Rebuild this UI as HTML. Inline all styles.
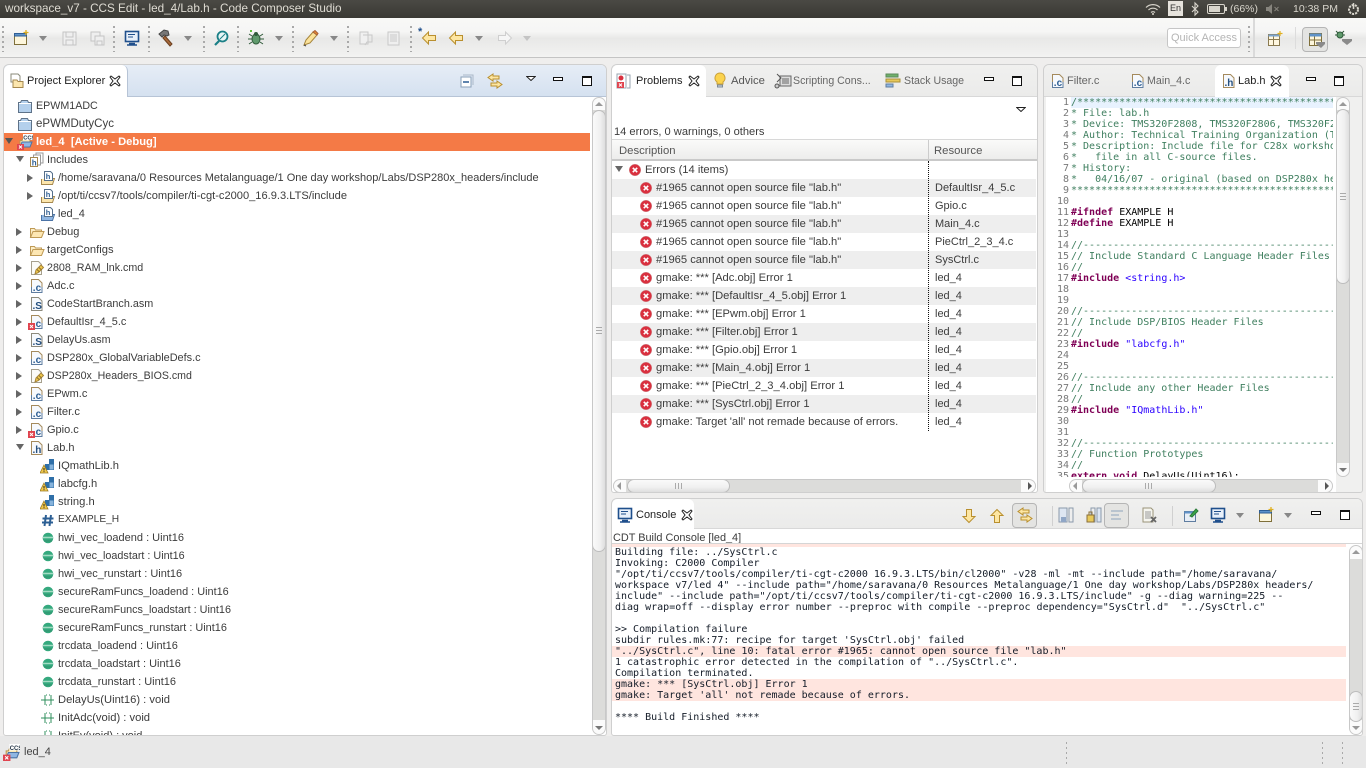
<!DOCTYPE html>
<html><head><meta charset="utf-8"><title>workspace_v7 - CCS Edit - led_4/Lab.h - Code Composer Studio</title>
<style>
*{box-sizing:border-box}
html,body{margin:0;padding:0;width:1366px;height:768px;overflow:hidden;background:#efeeed;font-family:"Liberation Sans",sans-serif;font-size:11px;color:#3c3c3c}
.a{position:absolute}
svg{position:absolute;overflow:visible}
#title{left:0;top:0;width:1366px;height:18px;background:linear-gradient(#4a4944,#3a3934);color:#dfdcd3;font-size:11.7px;line-height:18px;white-space:pre}
#tb{left:0;top:18px;width:1366px;height:40px;background:linear-gradient(#f8f8f7 0,#f6f6f5 35%,#e8e8e7 52%,#f0f0ef 90%,#f3f3f2 100%);border-bottom:1px solid #c4c4c4}
.grab{width:2px;height:26px;top:8px;background:repeating-linear-gradient(#a9a9a9 0 2px,transparent 2px 5px)}
.panel{background:#fff;border:1px solid #cfcfcf;border-radius:6px 6px 3px 3px;overflow:hidden}
.hdr{left:0;top:0;height:32px;background:linear-gradient(#f0f0ef,#ebebea);width:100%;border-bottom:1px solid #d8d8d8}
.tab{top:0;height:32px;background:#fff;border-radius:6px 6px 0 0;line-height:30px;color:#222}
.t{position:absolute;line-height:32px;top:0;white-space:pre}
.g{color:#666}
.r{position:absolute;height:18px;line-height:18px;white-space:pre;left:0;width:600px;font-size:11px}
.r b{font-weight:normal;position:absolute}
.l0 b{left:32px}.l1 b{left:43px}.l2 b{left:54px}
.tw{position:absolute;width:0;height:0;top:5px;border-left:6px solid #666;border-top:4px solid transparent;border-bottom:4px solid transparent}
.dn{position:absolute;width:0;height:0;top:5px;border-top:6px solid #666;border-left:4px solid transparent;border-right:4px solid transparent}
.s{background:#eeeeee}
.tr{position:absolute;left:0;width:424px;height:18px;line-height:18px;white-space:pre;font-size:11.2px}
.tr b{font-weight:normal;position:absolute;left:44px}
.tr i{font-style:normal;position:absolute;left:323px;font-size:11px}
.sb{position:absolute;background:#dcdcda;border:1px solid #c8c8c8;border-radius:7px;overflow:hidden}
.sbb{position:absolute;background:#fbfbfb}
.th{position:absolute;background:linear-gradient(90deg,#fafafa,#f0f0f0 60%,#dedede);border:1px solid #bdbdbd;border-radius:7px}
.thh{position:absolute;background:linear-gradient(#fafafa,#f0f0f0 60%,#dedede);border:1px solid #bdbdbd;border-radius:7px}
.code{font-family:"DejaVu Sans Mono","Liberation Mono",monospace;font-size:10px;line-height:11px;white-space:pre}
.code u{color:transparent;text-decoration:none}
.c{color:#3f7f5f}.k{color:#7f0055;font-weight:bold}.st{color:#2a00ff}.n{color:#000}
.mn{position:absolute;width:10px;height:4px;border:1px solid #111;background:#fff}
.mx{position:absolute;width:10px;height:10px;border:1px solid #111;border-top-width:2px;background:#fff}
.ar{position:absolute;width:0;height:0;border-top:5px solid #888;border-left:4px solid transparent;border-right:4px solid transparent}
.ard{border-top-color:#c4c4c4}
.pin{position:absolute;background:#ffe5df;height:11px;left:0;width:734px}
</style></head><body>
<svg width="0" height="0" style="position:absolute">
<defs>
<symbol id="proj" viewBox="0 0 16 16"><path d="M1.500 4.500h2l1-2h6l1 2h3v10h-13z" fill="#b4d0ec" stroke="#5e7288"/><path d="M2 5.500h12" stroke="#fff"/></symbol>
<symbol id="ccs" viewBox="0 0 16 16"><path d="M3 6.500h2l1-2h7v8h-10z" fill="#fbe9b8" stroke="#b9954e"/><path d="M3 13l2-5h10l-2 5z" fill="#8fb6e2" stroke="#4b73a5"/><rect x="6" y="0" width="10" height="6" fill="#fff"/><text x="6.300" y="5.600" font-size="5.600" font-family="Liberation Sans" font-weight="bold" fill="#234">CCS</text><rect x="0" y="10" width="7" height="6" fill="#e0444f"/><path d="M2 11.500l3 3M5 11.500l-3 3" stroke="#fff"/></symbol>
<symbol id="inc" viewBox="0 0 16 16"><path d="M7 1h7v10H7z" fill="#fff" stroke="#999"/><path d="M4.500 3h7v10h-7z" fill="#fff" stroke="#999"/><path d="M1.500 5.500h7v9h-7z" fill="#fff" stroke="#a5884f"/><text x="2.800" y="13.500" font-size="8" font-family="Liberation Sans" font-weight="bold" fill="#2b5d93">h</text></symbol>
<symbol id="incf" viewBox="0 0 16 16"><path d="M1.500 9v5.500h11l2-6h-3" fill="#fce6ad" stroke="#a5884f"/><path d="M4.500 1.500h6l2 2v7h-8z" fill="#fff" stroke="#566f8a"/><text x="5.800" y="9" font-size="7.500" font-family="Liberation Sans" font-weight="bold" fill="#2b5d93">h</text></symbol>
<symbol id="incb" viewBox="0 0 16 16"><path d="M1.500 9v5.500h11l2-6h-3" fill="#8fb6e2" stroke="#4b73a5"/><path d="M4.500 1.500h6l2 2v7h-8z" fill="#fff" stroke="#566f8a"/><text x="5.800" y="9" font-size="7.500" font-family="Liberation Sans" font-weight="bold" fill="#2b5d93">h</text></symbol>
<symbol id="fold" viewBox="0 0 16 16"><path d="M1.500 13.500v-9h4l1 1.500h6v2" fill="#fdeec7" stroke="#bf9a55"/><path d="M1.500 13.500l2.500-6h11l-2.500 6z" fill="#fde7b3" stroke="#bf9a55"/></symbol>
<symbol id="cmd" viewBox="0 0 16 16"><path d="M2.500 1.500h7l3 3v10h-10z" fill="#fbfbf8" stroke="#a6a08e"/><path d="M6 14l1-4 5-5 2.500 2.500-5 5z" fill="#f0c84a" stroke="#a5843a"/><path d="M8 9.500l2.500 2.500M10 7.500l2.500 2.500" stroke="#8b6d2a"/></symbol>
<symbol id="fc" viewBox="0 0 16 16"><path d="M2.500 1.500h7l3.500 3.500v9.500h-10.500z" fill="#f6f9fd" stroke="#a58a5c"/><path d="M2.500 9v5.500h10.500V9" fill="none" stroke="#5f7da0"/><text x="3.800" y="12.800" font-size="10" font-family="Liberation Sans" font-weight="bold" fill="#2b5d93">.c</text></symbol>
<symbol id="fs" viewBox="0 0 16 16"><path d="M2.500 1.500h7l3.500 3.500v9.500h-10.500z" fill="#f6f9fd" stroke="#8d8a7c"/><text x="3.500" y="12.800" font-size="10" font-family="Liberation Sans" font-weight="bold" fill="#25507f">.S</text></symbol>
<symbol id="fh" viewBox="0 0 16 16"><path d="M2.500 1.500h7l3.500 3.500v9.500h-10.500z" fill="#f6f9fd" stroke="#a58a5c"/><text x="3.500" y="12.800" font-size="10" font-family="Liberation Sans" font-weight="bold" fill="#25507f">.h</text></symbol>
<symbol id="xb" viewBox="0 0 7 7"><rect width="7" height="7" fill="#e0444f"/><path d="M2 2l3 3M5 2l-3 3" stroke="#fff"/></symbol>
<symbol id="hdr" viewBox="0 0 16 16"><path d="M5 6h4V1h5v11H5z" fill="#2f6fa8"/><path d="M9.500 6.500h4v5h-4z" fill="#86b3dc"/><path d="M4 7l4 8H0z" fill="#f3c94a" stroke="#9a7b25" stroke-width=".8"/><path d="M4 10v2.500M4 13.300v.8" stroke="#222"/></symbol>
<symbol id="hash" viewBox="0 0 16 16"><path d="M6 3L4.500 14M11 3L9.500 14M2.500 6.500h11M2 10.500h11" stroke="#2c5f94" stroke-width="2" fill="none"/></symbol>
<symbol id="dot" viewBox="0 0 16 16"><circle cx="8" cy="8" r="5.300" fill="#35a97e"/><path d="M3 7.500h10" stroke="#a4dcc4" stroke-width="1.600"/><path d="M4 11h8" stroke="#2f8f6c"/></symbol>
<symbol id="fn" viewBox="0 0 16 16"><path d="M1 8h13M5 3v10M11 3v10" stroke="#2f8f5c" fill="none"/><path d="M6 3h4M6 13h4" stroke="#2f8f5c" stroke-dasharray="1 2"/></symbol>
<symbol id="err" viewBox="0 0 12 12"><circle cx="6" cy="6" r="5.800" fill="#d9303f" stroke="#d09a9a" stroke-width=".5"/><path d="M3.800 3.800l4.400 4.400M8.200 3.800l-4.400 4.400" stroke="#fff" stroke-width="1.600"/></symbol>
<symbol id="cl" viewBox="0 0 12 12"><path d="M2 1l4 3 4-3 1 1-3 4 3 4-1 1-4-3-4 3-1-1 3-4-3-4z" fill="#fff" stroke="#222"/></symbol>
<symbol id="mon" viewBox="0 0 16 16"><rect x="1.500" y="1.500" width="13" height="10" fill="#e8f0fa" stroke="#1f4f8c" stroke-width="1.600"/><path d="M4 4.500h7M4 7h5" stroke="#1f4f8c"/><path d="M5 13.500h6M3 15h10" stroke="#1f4f8c" stroke-width="1.500"/></symbol>
<symbol id="larr" viewBox="0 0 16 16"><path d="M7.500 2L1.500 8l6 6v-3.500h7v-5h-7z" fill="#fde6a2" stroke="#b98f2e"/></symbol>
<symbol id="uarr" viewBox="0 0 16 16"><path d="M8 1.500l6 6h-3.500v7h-5v-7H2z" fill="#fde6a2" stroke="#b98f2e"/></symbol>
<symbol id="darr" viewBox="0 0 16 16"><path d="M8 14.500l6-6h-3.500v-7h-5v7H2z" fill="#fde6a2" stroke="#b98f2e"/></symbol>
<symbol id="link" viewBox="0 0 16 16"><path d="M6 1L1 4.500 6 8V6h6V3H6z" fill="#fde6a2" stroke="#b98f2e"/><path d="M10 8l5 3.500-5 3.500v-2H4v-3h6z" fill="#fde6a2" stroke="#b98f2e"/></symbol>
<symbol id="newv" viewBox="0 0 16 16"><path d="M1.500 3.500h12v11h-12z" fill="#fdf6dc" stroke="#7f6f3a"/><path d="M1.500 3.500h12v2.500h-12z" fill="#5f93c9" stroke="#2f5f96"/><path d="M13 0v5M10.500 2.500h5" stroke="#e0b020" stroke-width="1.300"/></symbol>
<symbol id="vm" viewBox="0 0 10 5"><path d="M.7.500h8.600L5 4.500z" fill="#fff" stroke="#222"/></symbol>
</defs></svg>

<div class="a" id="title"><span class="a" style="left:5px;top:0">workspace_v7 - CCS Edit - led_4/Lab.h - Code Composer Studio</span>
<svg style="left:1145px;top:3px" width="16" height="12" viewBox="0 0 16 12"><path d="M1 4.500a10 10 0 0 1 14 0M3.500 7a6.500 6.500 0 0 1 9 0M6 9.500a3 3 0 0 1 4 0" fill="none" stroke="#d8d5cc" stroke-width="1.200"/><circle cx="8" cy="11" r="1" fill="#d8d5cc"/></svg>
<span class="a" style="left:1168px;top:1px;width:15px;height:15px;background:#e6e3dd;color:#333;font-size:9px;line-height:15px;text-align:center">En</span>
<svg style="left:1191px;top:2px" width="8" height="14" viewBox="0 0 8 14"><path d="M1 4l6 6-3 3V1l3 3-6 6" fill="none" stroke="#d8d5cc" stroke-width="1.100"/></svg>
<span class="a" style="left:1207px;top:4px;width:18px;height:10px;border:1px solid #d8d5cc;border-radius:2px"><span class="a" style="left:1px;top:1px;width:11px;height:6px;background:#d8d5cc"></span></span>
<span class="a" style="left:1225px;top:7px;width:2px;height:4px;background:#d8d5cc"></span>
<span class="a" style="left:1230px;top:0;font-size:10.500px;color:#d8d5cc">(66%)</span>
<svg style="left:1266px;top:4px" width="14" height="10" viewBox="0 0 14 10"><path d="M0 3h2.500L6 0v10L2.500 7H0z" fill="#86847d"/><path d="M8.500 3l4 4M12.500 3l-4 4" stroke="#86847d"/></svg>
<span class="a" style="left:1293px;top:0;font-size:10.500px;color:#d8d5cc">10:38 PM</span>
<svg style="left:1347px;top:2px" width="13" height="14" viewBox="0 0 13 14"><circle cx="6.500" cy="7.500" r="4.500" fill="none" stroke="#d8d5cc" stroke-width="2" stroke-dasharray="2.200 1"/><path d="M6.500 1v6" stroke="#d8d5cc" stroke-width="1.500"/></svg>
</div>

<div class="a" id="tb">
<div class="a grab" style="left:2px"></div><div class="a grab" style="left:113px"></div><div class="a grab" style="left:148px"></div><div class="a grab" style="left:203px"></div><div class="a grab" style="left:237px"></div><div class="a grab" style="left:292px"></div><div class="a grab" style="left:347px"></div><div class="a grab" style="left:410px"></div>
<svg style="left:13px;top:12px" width="16" height="16"><use href="#newv"/></svg><div class="ar" style="left:39px;top:18px"></div>
<svg style="left:62px;top:13px" width="15" height="15" viewBox="0 0 15 15"><path d="M1 1h13v13H1z" fill="#efefef" stroke="#c4c4c4"/><path d="M4 1v5h7V1M4 14V9h7v5" fill="none" stroke="#c4c4c4"/></svg>
<svg style="left:90px;top:13px" width="15" height="15" viewBox="0 0 15 15"><path d="M1 1h9v9H1z" fill="#efefef" stroke="#c4c4c4"/><path d="M5 5h9v9H5z" fill="#efefef" stroke="#c4c4c4"/><path d="M7 14v-4h5v4" fill="none" stroke="#c4c4c4"/></svg>
<svg style="left:124px;top:12px" width="16" height="16"><use href="#mon"/></svg>
<svg style="left:158px;top:11px" width="16" height="18" viewBox="0 0 16 18"><path d="M7 7l7 8-2 2-7-8z" fill="#a5683a" stroke="#6b3f1f"/><path d="M1 5l5-4 4 1 1 4-2 1-3-1-2 2z" fill="#777" stroke="#444"/></svg><div class="ar" style="left:184px;top:18px"></div>
<svg style="left:213px;top:12px" width="16" height="16" viewBox="0 0 16 16"><circle cx="9.500" cy="6.500" r="5" fill="#e8f6f6" stroke="#1a7f86" stroke-width="1.800"/><path d="M6 11l-4 4" stroke="#1a7f86" stroke-width="2.200"/><path d="M7 9l5-5" stroke="#1a7f86"/></svg>
<svg style="left:248px;top:12px" width="16" height="16" viewBox="0 0 16 16"><ellipse cx="8" cy="9" rx="4" ry="5" fill="#5f9a6c" stroke="#2f5a3a"/><circle cx="8" cy="4" r="2" fill="#2f5a3a"/><path d="M4 6L1 4M4 9H0M4 12l-3 2M12 6l3-2M12 9h4M12 12l3 2" stroke="#2f5a3a"/><path d="M2 0h2v2H2z" fill="#5fc03a"/></svg><div class="ar" style="left:275px;top:18px"></div>
<svg style="left:303px;top:12px" width="16" height="17" viewBox="0 0 16 17"><path d="M1 15l2-5 7-8 4 3-7 8z" fill="#fbe29a" stroke="#a5843a"/><path d="M10 2l2-1.500 3 3L14 5z" fill="#e98a30" stroke="#a5603a"/><path d="M1 15l2 1" stroke="#444"/></svg><div class="ar" style="left:330px;top:18px"></div>
<svg style="left:358px;top:13px" width="15" height="15" viewBox="0 0 15 15"><path d="M2 1h8v12H2z" fill="#f0f0f0" stroke="#c8c8c8"/><path d="M5 4h9v7H9l-2 3" fill="none" stroke="#c8c8c8"/></svg>
<svg style="left:386px;top:13px" width="15" height="15" viewBox="0 0 15 15"><path d="M2 1h11v13H2z" fill="#efefef" stroke="#c8c8c8"/><path d="M4 4h7M4 6h7M4 8h7M4 10h7" stroke="#c8c8c8"/></svg>
<svg style="left:421px;top:12px" width="16" height="16"><use href="#larr"/></svg><span class="a" style="left:418px;top:8px;color:#1f4f8c;font-weight:bold;font-size:11px">*</span>
<svg style="left:448px;top:12px" width="16" height="16"><use href="#larr"/></svg><div class="ar" style="left:475px;top:18px"></div>
<svg style="left:497px;top:12px;transform:scaleX(-1)" width="16" height="16" viewBox="0 0 16 16"><path d="M7.500 2L1.500 8l6 6v-3.500h7v-5h-7z" fill="#f6f6f6" stroke="#cfcfcf"/></svg><div class="ar ard" style="left:523px;top:18px"></div>
<div class="a" style="left:1167px;top:10px;width:74px;height:20px;background:#fff;border:1px solid #c6c6c6;border-radius:3px;color:#b5b5b5;font-size:11px;line-height:18px;text-align:center;white-space:nowrap">Quick Access</div>
<div class="a grab" style="left:1248px"></div>
<div class="a" style="left:1253px;top:0;width:2px;height:39px;background:#dadada"></div>
<svg style="left:1267px;top:13px" width="16" height="16" viewBox="0 0 16 16"><path d="M1.500 3.500h11v11h-11z" fill="#fff7e0" stroke="#8a7a50"/><path d="M1.500 8.500h11M6.500 3.500v11" stroke="#8a7a50"/><path d="M1.500 3.500h11v2h-11z" fill="#7ba4d0"/><path d="M13 0v5M10.500 2.500h5" stroke="#e0b020" stroke-width="1.200"/></svg>
<div class="a" style="left:1295px;top:9px;width:1px;height:22px;background:#dcdcdc"></div>
<div class="a" style="left:1302px;top:9px;width:26px;height:25px;background:#e4e4e2;border:1px solid #b5b5b5;border-radius:4px"></div>
<svg style="left:1309px;top:14px" width="16" height="16" viewBox="0 0 16 16"><path d="M.5 1.500h12v12H.5z" fill="#fdf6dc" stroke="#7f6f3a"/><path d="M.5 1.500h12v3H.5z" fill="#5f93c9"/><path d="M.5 8h12M5.500 4.500v9" stroke="#7f6f3a"/><path d="M7 10h9v2l-4 4-5-4z" fill="#8a8a8a"/></svg>
<svg style="left:1335px;top:13px" width="17" height="15" viewBox="0 0 17 15"><circle cx="5" cy="4" r="3" fill="#5f9a6c" stroke="#2f5a3a"/><path d="M1 0l2 2M9 0L7 2M0 4h2M8 4h2" stroke="#2f5a3a"/><path d="M7 8h10v2l-5 4-5-4z" fill="#8a8a8a"/></svg>
</div>

<!-- Project Explorer -->
<div class="a panel" style="left:3px;top:64px;width:604px;height:672px">
<div class="a" style="left:0;top:0;width:100%;height:32px;background:linear-gradient(#e6edf6,#d5e1f0);border-bottom:1px solid #b7c4d6"></div>
<div class="a tab" style="left:0;top:0;width:124px;height:32px;background:#fff;border-right:1px solid #b7c4d6"></div>
<svg style="left:5px;top:8px" width="16" height="16" viewBox="0 0 16 16"><path d="M2 1h7l2 2v6H2z" fill="#fff" stroke="#8a8a7a"/><path d="M4 7h4l1 1.500h5v6H4z" fill="#fce6ad" stroke="#a5884f"/></svg>
<span class="t" style="left:23px;color:#222;font-size:11px">Project Explorer</span>
<svg style="left:105px;top:10px" width="12" height="12"><use href="#cl"/></svg>
<svg style="left:456px;top:9px" width="14" height="14" viewBox="0 0 14 14"><path d="M1 3h10v10H1z" fill="#fff" stroke="#8aa0b8"/><path d="M3 1h10v10" fill="none" stroke="#aab8c8"/><path d="M3 8h6" stroke="#2b5d93" stroke-width="1.500"/></svg>
<svg style="left:483px;top:8px" width="16" height="16"><use href="#link"/></svg>
<svg style="left:522px;top:11px" width="10" height="5"><use href="#vm"/></svg>
<div class="mn" style="left:549px;top:12px"></div><div class="mx" style="left:578px;top:11px"></div>
<div class="a" style="left:0;top:32px;width:588px;height:639px;overflow:hidden;color:#3c3c3c">
<div id="tree" class="a" style="left:0;top:0;width:588px;height:640px">
<div class="r l0" style="top:0;font-size:10.700px"><svg style="left:13px;top:1px" width="16" height="16"><use href="#proj"/></svg><b>EPWM1ADC</b></div>
<div class="r l0" style="top:18px;font-size:11.500px"><svg style="left:13px;top:1px" width="16" height="16"><use href="#proj"/></svg><b>ePWMDutyCyc</b></div>
<div class="r l0" style="top:36px;background:#f47a46;color:#fff;width:586px;font-weight:bold"><div class="dn" style="left:1px;border-top-color:#555"></div><svg style="left:13px;top:1px" width="16" height="16"><use href="#ccs"/></svg><b style="font-weight:bold;font-size:11.200px">led_4  [Active - Debug]</b></div>
<div class="r l1" style="top:54px"><div class="dn" style="left:12px"></div><svg style="left:25px;top:1px" width="16" height="16"><use href="#inc"/></svg><b>Includes</b></div>
<div class="r l2" style="top:72px"><div class="tw" style="left:23px"></div><svg style="left:36px;top:1px" width="16" height="16"><use href="#incf"/></svg><b>/home/saravana/0 Resources Metalanguage/1 One day workshop/Labs/DSP280x_headers/include</b></div>
<div class="r l2" style="top:90px;font-size:11.100px"><div class="tw" style="left:23px"></div><svg style="left:36px;top:1px" width="16" height="16"><use href="#incf"/></svg><b>/opt/ti/ccsv7/tools/compiler/ti-cgt-c2000_16.9.3.LTS/include</b></div>
<div class="r l2" style="top:108px"><svg style="left:36px;top:1px" width="16" height="16"><use href="#incb"/></svg><b>led_4</b></div>
<div class="r l1" style="top:126px"><div class="tw" style="left:12px"></div><svg style="left:25px;top:1px" width="16" height="16"><use href="#fold"/></svg><b>Debug</b></div>
<div class="r l1" style="top:144px;font-size:11.200px"><div class="tw" style="left:12px"></div><svg style="left:25px;top:1px" width="16" height="16"><use href="#fold"/></svg><b>targetConfigs</b></div>
<div class="r l1" style="top:162px;font-size:10.700px"><div class="tw" style="left:12px"></div><svg style="left:25px;top:1px" width="16" height="16"><use href="#cmd"/></svg><b>2808_RAM_lnk.cmd</b></div>
<div class="r l1" style="top:180px"><div class="tw" style="left:12px"></div><svg style="left:25px;top:1px" width="16" height="16"><use href="#fc"/></svg><b>Adc.c</b></div>
<div class="r l1" style="top:198px;font-size:10.800px"><div class="tw" style="left:12px"></div><svg style="left:25px;top:1px" width="16" height="16"><use href="#fs"/></svg><b>CodeStartBranch.asm</b></div>
<div class="r l1" style="top:216px;font-size:10.900px"><div class="tw" style="left:12px"></div><svg style="left:25px;top:1px" width="16" height="16"><use href="#fc"/></svg><svg style="left:24px;top:10px" width="7" height="7"><use href="#xb"/></svg><b>DefaultIsr_4_5.c</b></div>
<div class="r l1" style="top:234px;font-size:10.700px"><div class="tw" style="left:12px"></div><svg style="left:25px;top:1px" width="16" height="16"><use href="#fs"/></svg><b>DelayUs.asm</b></div>
<div class="r l1" style="top:252px;font-size:10.900px"><div class="tw" style="left:12px"></div><svg style="left:25px;top:1px" width="16" height="16"><use href="#fc"/></svg><b>DSP280x_GlobalVariableDefs.c</b></div>
<div class="r l1" style="top:270px;font-size:10.600px"><div class="tw" style="left:12px"></div><svg style="left:25px;top:1px" width="16" height="16"><use href="#cmd"/></svg><b>DSP280x_Headers_BIOS.cmd</b></div>
<div class="r l1" style="top:288px"><div class="tw" style="left:12px"></div><svg style="left:25px;top:1px" width="16" height="16"><use href="#fc"/></svg><b>EPwm.c</b></div>
<div class="r l1" style="top:306px;font-size:11.200px"><div class="tw" style="left:12px"></div><svg style="left:25px;top:1px" width="16" height="16"><use href="#fc"/></svg><b>Filter.c</b></div>
<div class="r l1" style="top:324px"><div class="tw" style="left:12px"></div><svg style="left:25px;top:1px" width="16" height="16"><use href="#fc"/></svg><svg style="left:24px;top:10px" width="7" height="7"><use href="#xb"/></svg><b>Gpio.c</b></div>
<div class="r l1" style="top:342px"><div class="dn" style="left:12px"></div><svg style="left:25px;top:1px" width="16" height="16"><use href="#fh"/></svg><b>Lab.h</b></div>
<div class="r l2" style="top:360px;font-size:11.200px"><svg style="left:36px;top:1px" width="16" height="16"><use href="#hdr"/></svg><b>IQmathLib.h</b></div>
<div class="r l2" style="top:378px;font-size:11.200px"><svg style="left:36px;top:1px" width="16" height="16"><use href="#hdr"/></svg><b>labcfg.h</b></div>
<div class="r l2" style="top:396px;font-size:11.200px"><svg style="left:36px;top:1px" width="16" height="16"><use href="#hdr"/></svg><b>string.h</b></div>
<div class="r l2" style="top:414px;font-size:10.200px"><svg style="left:36px;top:1px" width="16" height="16"><use href="#hash"/></svg><b>EXAMPLE_H</b></div>
<div class="r l2" style="top:432px"><svg style="left:36px;top:1px" width="16" height="16"><use href="#dot"/></svg><b>hwi_vec_loadend : Uint16</b></div>
<div class="r l2" style="top:450px;font-size:10.800px"><svg style="left:36px;top:1px" width="16" height="16"><use href="#dot"/></svg><b>hwi_vec_loadstart : Uint16</b></div>
<div class="r l2" style="top:468px"><svg style="left:36px;top:1px" width="16" height="16"><use href="#dot"/></svg><b>hwi_vec_runstart : Uint16</b></div>
<div class="r l2" style="top:486px;font-size:10.900px"><svg style="left:36px;top:1px" width="16" height="16"><use href="#dot"/></svg><b>secureRamFuncs_loadend : Uint16</b></div>
<div class="r l2" style="top:504px;font-size:10.850px"><svg style="left:36px;top:1px" width="16" height="16"><use href="#dot"/></svg><b>secureRamFuncs_loadstart : Uint16</b></div>
<div class="r l2" style="top:522px;font-size:10.900px"><svg style="left:36px;top:1px" width="16" height="16"><use href="#dot"/></svg><b>secureRamFuncs_runstart : Uint16</b></div>
<div class="r l2" style="top:540px"><svg style="left:36px;top:1px" width="16" height="16"><use href="#dot"/></svg><b>trcdata_loadend : Uint16</b></div>
<div class="r l2" style="top:558px"><svg style="left:36px;top:1px" width="16" height="16"><use href="#dot"/></svg><b>trcdata_loadstart : Uint16</b></div>
<div class="r l2" style="top:576px"><svg style="left:36px;top:1px" width="16" height="16"><use href="#dot"/></svg><b>trcdata_runstart : Uint16</b></div>
<div class="r l2" style="top:594px;font-size:11.200px"><svg style="left:36px;top:1px" width="16" height="16"><use href="#fn"/></svg><b>DelayUs(Uint16) : void</b></div>
<div class="r l2" style="top:612px;font-size:11.200px"><svg style="left:36px;top:1px" width="16" height="16"><use href="#fn"/></svg><b>InitAdc(void) : void</b></div>
<div class="r l2" style="top:630px"><svg style="left:36px;top:1px" width="16" height="16"><use href="#fn"/></svg><b>InitEv(void) : void</b></div>
</div></div>
<div class="sb" style="left:588px;top:32px;width:14px;height:638px"><div class="sbb" style="left:0;top:0;width:12px;height:12px"></div><div class="sbb" style="left:0;bottom:0;width:12px;height:14px"></div>
<div class="th" style="left:-1px;top:12px;width:14px;height:442px"></div>
<div class="a" style="left:3px;top:229px;width:6px;height:8px;background:repeating-linear-gradient(#aaa 0 1px,transparent 1px 3px)"></div>
<div class="a" style="left:2px;top:4px;border-bottom:4px solid #999;border-left:4px solid transparent;border-right:4px solid transparent"></div>
<div class="a" style="left:2px;bottom:4px;border-top:4px solid #777;border-left:4px solid transparent;border-right:4px solid transparent"></div></div>
</div>

<!-- Problems -->
<div class="a panel" style="left:611px;top:64px;width:427px;height:429px">
<div class="a hdr"></div>
<div class="a tab" style="left:0;width:94px"></div>
<svg style="left:4px;top:8px" width="16" height="16" viewBox="0 0 16 16"><path d="M1 1h9v14H1z" fill="#fff" stroke="#9aa5b0"/><circle cx="5" cy="5" r="2.500" fill="#d9303f"/><rect x="1" y="9" width="7" height="6" fill="#e0444f"/><path d="M3 10.500l3 3M6 10.500l-3 3" stroke="#fff"/><path d="M11 2h3v13h-3" fill="none" stroke="#9aa5b0"/></svg>
<span class="t" style="left:24px;color:#222;font-size:11px">Problems</span>
<svg style="left:76px;top:10px" width="12" height="12"><use href="#cl"/></svg>
<svg style="left:102px;top:7px" width="12" height="17" viewBox="0 0 12 17"><path d="M6 1a5 5 0 0 1 3 9v2H3v-2a5 5 0 0 1 3-9z" fill="#fbd34e" stroke="#c9a03a"/><path d="M3.500 13h5v2h-5z" fill="#cfd8e0" stroke="#7b8a99"/></svg>
<span class="t" style="left:119px;font-size:11.300px;color:#555">Advice</span>
<svg style="left:162px;top:8px" width="18" height="16" viewBox="0 0 18 16"><path d="M6 3h11v10H6z" fill="#ddd" stroke="#666"/><path d="M8 6h7M8 8h7M8 10h7" stroke="#666"/><path d="M3 1l4 4-4 4" fill="none" stroke="#555"/><circle cx="3" cy="13" r="2" fill="#ccc" stroke="#555"/></svg>
<span class="t g" style="left:181px;font-size:10.600px">Scripting Cons...</span>
<svg style="left:273px;top:8px" width="15" height="16" viewBox="0 0 15 16"><path d="M1 1h12v3H1z" fill="#6fb06a" stroke="#5c8a5a"/><path d="M1 6h14v3H1z" fill="#e8c95a" stroke="#a8903a"/><path d="M1 11h7v3H1z" fill="#8fb6e2" stroke="#5f7da0"/></svg>
<span class="t g" style="left:292px;font-size:10.600px">Stack Usage</span>
<div class="mn" style="left:372px;top:12px"></div><div class="mx" style="left:400px;top:11px"></div>
<svg style="left:404px;top:42px" width="10" height="5"><use href="#vm"/></svg>
<div class="a" style="left:2px;top:59px;white-space:pre;font-size:11.100px;line-height:16px">14 errors, 0 warnings, 0 others</div>
<div class="a" style="left:0;top:74px;width:425px;height:1px;background:#d8d8d8"></div>
<div class="a" style="left:0;top:75px;width:425px;height:21px;background:linear-gradient(#fafaf9,#ededec);border-bottom:2px solid #c9c9c9"></div>
<span class="a" style="left:7px;top:77px;line-height:18px;font-size:11.300px;color:#555">Description</span>
<span class="a" style="left:322px;top:77px;line-height:18px;font-size:11.300px;color:#555">Resource</span>
<div class="a" style="left:316px;top:75px;width:1px;height:21px;background:#ccc"></div>
<div class="a" style="left:0;top:96px;width:425px;height:270px;overflow:hidden">
<div class="tr" style="top:0"><div class="dn" style="left:3px"></div><svg style="left:17px;top:3px" width="12" height="12"><use href="#err"/></svg><b style="left:33px">Errors (14 items)</b></div>
<div class="tr s" style="top:18px"><svg style="left:28px;top:3px" width="12" height="12"><use href="#err"/></svg><b>#1965 cannot open source file "lab.h"</b><i>DefaultIsr_4_5.c</i></div>
<div class="tr" style="top:36px"><svg style="left:28px;top:3px" width="12" height="12"><use href="#err"/></svg><b>#1965 cannot open source file "lab.h"</b><i>Gpio.c</i></div>
<div class="tr s" style="top:54px"><svg style="left:28px;top:3px" width="12" height="12"><use href="#err"/></svg><b>#1965 cannot open source file "lab.h"</b><i>Main_4.c</i></div>
<div class="tr" style="top:72px"><svg style="left:28px;top:3px" width="12" height="12"><use href="#err"/></svg><b>#1965 cannot open source file "lab.h"</b><i>PieCtrl_2_3_4.c</i></div>
<div class="tr s" style="top:90px"><svg style="left:28px;top:3px" width="12" height="12"><use href="#err"/></svg><b>#1965 cannot open source file "lab.h"</b><i>SysCtrl.c</i></div>
<div class="tr" style="top:108px"><svg style="left:28px;top:3px" width="12" height="12"><use href="#err"/></svg><b>gmake: *** [Adc.obj] Error 1</b><i>led_4</i></div>
<div class="tr s" style="top:126px"><svg style="left:28px;top:3px" width="12" height="12"><use href="#err"/></svg><b>gmake: *** [DefaultIsr_4_5.obj] Error 1</b><i>led_4</i></div>
<div class="tr" style="top:144px"><svg style="left:28px;top:3px" width="12" height="12"><use href="#err"/></svg><b>gmake: *** [EPwm.obj] Error 1</b><i>led_4</i></div>
<div class="tr s" style="top:162px"><svg style="left:28px;top:3px" width="12" height="12"><use href="#err"/></svg><b>gmake: *** [Filter.obj] Error 1</b><i>led_4</i></div>
<div class="tr" style="top:180px"><svg style="left:28px;top:3px" width="12" height="12"><use href="#err"/></svg><b>gmake: *** [Gpio.obj] Error 1</b><i>led_4</i></div>
<div class="tr s" style="top:198px"><svg style="left:28px;top:3px" width="12" height="12"><use href="#err"/></svg><b>gmake: *** [Main_4.obj] Error 1</b><i>led_4</i></div>
<div class="tr" style="top:216px"><svg style="left:28px;top:3px" width="12" height="12"><use href="#err"/></svg><b>gmake: *** [PieCtrl_2_3_4.obj] Error 1</b><i>led_4</i></div>
<div class="tr s" style="top:234px"><svg style="left:28px;top:3px" width="12" height="12"><use href="#err"/></svg><b>gmake: *** [SysCtrl.obj] Error 1</b><i>led_4</i></div>
<div class="tr" style="top:252px"><svg style="left:28px;top:3px" width="12" height="12"><use href="#err"/></svg><b>gmake: Target 'all' not remade because of errors.</b><i>led_4</i></div>
<div class="a" style="left:316px;top:0;width:0;height:270px;border-left:1px dotted #111"></div>
</div>
<div class="sb" style="left:1px;top:414px;width:423px;height:14px"><div class="sbb" style="left:0;top:0;width:12px;height:12px"></div><div class="sbb" style="right:0;top:0;width:14px;height:12px"></div><div class="thh" style="left:13px;top:-1px;width:103px;height:14px"></div>
<div class="a" style="left:3px;top:2px;border-right:4px solid #999;border-top:4px solid transparent;border-bottom:4px solid transparent"></div>
<div class="a" style="right:3px;top:2px;border-left:4px solid #555;border-top:4px solid transparent;border-bottom:4px solid transparent"></div>
<div class="a" style="left:61px;top:3px;width:8px;height:6px;background:repeating-linear-gradient(90deg,#aaa 0 1px,transparent 1px 3px)"></div></div>
</div>

<!-- Editor -->
<div class="a panel" style="left:1043px;top:64px;width:320px;height:429px;background:#f0f0ef">
<div class="a hdr"></div>
<svg style="left:6px;top:8px" width="16" height="16"><use href="#fc"/></svg><span class="t g" style="left:23px;font-size:11px">Filter.c</span>
<svg style="left:86px;top:8px" width="16" height="16"><use href="#fc"/></svg><span class="t g" style="left:103px;font-size:10.700px">Main_4.c</span>
<div class="a tab" style="left:171px;width:74px"></div>
<svg style="left:177px;top:8px" width="16" height="16"><use href="#fh"/></svg><span class="t" style="left:194px;color:#222;font-size:11px">Lab.h</span>
<svg style="left:226px;top:10px" width="12" height="12"><use href="#cl"/></svg>
<div class="mn" style="left:262px;top:12px"></div><div class="mx" style="left:290px;top:11px"></div>
<div class="a" style="left:2px;top:32px;width:290px;height:395px;background:#fff"></div>
<div class="a" style="left:27px;top:32px;width:262px;height:11px;background:#e8f2fe"></div>
<div class="a code" style="left:2px;top:32px;width:23px;height:380px;overflow:hidden;text-align:right;color:#787878">1
2
3
4
5
6
7
8
9
10
11
12
13
14
15
16
17
18
19
20
21
22
23
24
25
26
27
28
29
30
31
32
33
34
35</div>
<div class="a code" style="left:27px;top:32px;width:262px;height:380px;overflow:hidden"><span class="c">/***************************************************
* File: lab.h
* Device: TMS320F2808, TMS320F2806, TMS320F2801
* Author: Technical Training Organization (TTO)
* Description: Include file for C28x workshop
*   file in all C-source files.
* History:
*   04/16/07 - original (based on DSP280x header)
****************************************************</span>

<span class="k">#ifndef</span> <span class="n">EXAMPLE<u>_</u>H</span>
<span class="k">#define</span> <span class="n">EXAMPLE<u>_</u>H</span>

<span class="c">//--------------------------------------------------
// Include Standard C Language Header Files
//</span>
<span class="k">#include</span> <span class="st">&lt;string.h&gt;</span>


<span class="c">//--------------------------------------------------
// Include DSP/BIOS Header Files
//</span>
<span class="k">#include</span> <span class="st">"labcfg.h"</span>


<span class="c">//--------------------------------------------------
// Include any other Header Files
//</span>
<span class="k">#include</span> <span class="st">"IQmathLib.h"</span>


<span class="c">//--------------------------------------------------
// Function Prototypes
//</span>
<span class="k">extern void</span> <span class="n">DelayUs(Uint16);</span></div>
<div class="sb" style="left:292px;top:32px;width:14px;height:380px"><div class="sbb" style="left:0;top:0;width:12px;height:12px"></div><div class="sbb" style="left:0;bottom:0;width:12px;height:13px"></div><div class="th" style="left:-1px;top:11px;width:14px;height:175px"></div>
<div class="a" style="left:3px;top:95px;width:6px;height:8px;background:repeating-linear-gradient(#aaa 0 1px,transparent 1px 3px)"></div>
<div class="a" style="left:2px;top:4px;border-bottom:4px solid #999;border-left:4px solid transparent;border-right:4px solid transparent"></div>
<div class="a" style="left:2px;bottom:4px;border-top:4px solid #777;border-left:4px solid transparent;border-right:4px solid transparent"></div></div>
<div class="sb" style="left:25px;top:414px;width:264px;height:14px"><div class="sbb" style="left:0;top:0;width:12px;height:12px"></div><div class="sbb" style="right:0;top:0;width:14px;height:12px"></div><div class="thh" style="left:12px;top:-1px;width:134px;height:14px"></div>
<div class="a" style="left:3px;top:2px;border-right:4px solid #999;border-top:4px solid transparent;border-bottom:4px solid transparent"></div>
<div class="a" style="right:3px;top:2px;border-left:4px solid #555;border-top:4px solid transparent;border-bottom:4px solid transparent"></div>
<div class="a" style="left:75px;top:3px;width:8px;height:6px;background:repeating-linear-gradient(90deg,#aaa 0 1px,transparent 1px 3px)"></div></div>
</div>

<!-- Console -->
<div class="a panel" style="left:611px;top:498px;width:752px;height:238px">
<div class="a hdr" style="height:30px"></div>
<div class="a tab" style="left:0;width:82px;height:30px"></div>
<svg style="left:5px;top:8px" width="16" height="16"><use href="#mon"/></svg>
<span class="t" style="left:24px;top:0;color:#222;font-size:11px">Console</span>
<svg style="left:69px;top:10px" width="12" height="12"><use href="#cl"/></svg>
<svg style="left:349px;top:9px" width="16" height="16"><use href="#darr"/></svg>
<svg style="left:377px;top:9px" width="16" height="16"><use href="#uarr"/></svg>
<div class="a" style="left:400px;top:4px;width:25px;height:25px;background:#e4e4e2;border:1px solid #b5b5b5;border-radius:4px"></div>
<svg style="left:405px;top:8px" width="16" height="16"><use href="#link"/></svg>
<div class="a" style="left:440px;top:7px;width:1px;height:20px;background:#d0d0d0"></div>
<svg style="left:446px;top:8px" width="16" height="16" viewBox="0 0 16 16"><path d="M1 1h8v14H1z" fill="#dde6f2" stroke="#8a99ab"/><path d="M11 1h4v14h-4z" fill="#eee" stroke="#8a99ab"/><path d="M3 10h5v5H3z" fill="#8fa6c6"/></svg>
<svg style="left:474px;top:8px" width="16" height="16" viewBox="0 0 16 16"><path d="M5 1h4v14H5z" fill="#eee" stroke="#8a99ab"/><path d="M11 1h4v14h-4z" fill="#dde6f2" stroke="#8a99ab"/><path d="M1 8h7v7H1z" fill="#e8c95a" stroke="#8a703a"/><path d="M3 8V5h3v3" fill="none" stroke="#8a703a"/></svg>
<div class="a" style="left:492px;top:4px;width:25px;height:25px;background:#e4e4e2;border:1px solid #b5b5b5;border-radius:4px"></div>
<svg style="left:497px;top:8px" width="16" height="16" viewBox="0 0 16 16"><path d="M2 4h12M2 8h8M2 12h10" stroke="#9fb0c4" stroke-width="1.300"/></svg>
<svg style="left:530px;top:8px" width="16" height="16" viewBox="0 0 16 16"><path d="M1 1h8l2 2v12H1z" fill="#f5f5ef" stroke="#9a9478"/><path d="M3 5h6M3 7h6M3 9h6M3 11h6" stroke="#999"/><path d="M9 10l5 5M14 10l-5 5" stroke="#666" stroke-width="1.800"/></svg>
<div class="a" style="left:560px;top:7px;width:1px;height:20px;background:#d0d0d0"></div>
<svg style="left:571px;top:8px" width="16" height="16" viewBox="0 0 16 16"><path d="M1.500 4.500h11v10h-11z" fill="#e8eef6" stroke="#5f7da0"/><path d="M1.500 4.500h11v2h-11z" fill="#5f93c9"/><path d="M7 9l6-7 2 2-6 6z" fill="#3aa84a" stroke="#2a7a38"/></svg>
<svg style="left:598px;top:8px" width="16" height="16"><use href="#mon"/></svg><div class="ar" style="left:624px;top:14px"></div>
<svg style="left:646px;top:8px" width="16" height="16"><use href="#newv"/></svg><div class="ar" style="left:672px;top:14px"></div>
<div class="mn" style="left:699px;top:12px"></div><div class="mx" style="left:728px;top:11px"></div>
<div class="a" style="left:1px;top:32px;white-space:pre;font-size:10.900px;line-height:14px">CDT Build Console [led_4]</div>
<div class="a" style="left:0;top:44px;width:750px;height:1px;background:#d5d5d5"></div>
<div class="a" style="left:0;top:45px;width:734px;height:3px;background:#ffe5df"></div>
<div class="a code" style="left:0;top:48px;width:734px;height:188px;overflow:hidden;color:#141c28">
<div class="pin" style="top:99px"></div><div class="pin" style="top:132px;height:22px"></div>
<div class="a" style="left:3px;top:0">Building file: ../SysCtrl.c
Invoking: C2000 Compiler
"/opt/ti/ccsv7/tools/compiler/ti-cgt-c2000<u>_</u>16.9.3.LTS/bin/cl2000" -v28 -ml -mt --include<u>_</u>path="/home/saravana/
workspace<u>_</u>v7/led<u>_</u>4" --include<u>_</u>path="/home/saravana/0 Resources Metalanguage/1 One day workshop/Labs/DSP280x<u>_</u>headers/
include" --include<u>_</u>path="/opt/ti/ccsv7/tools/compiler/ti-cgt-c2000<u>_</u>16.9.3.LTS/include" -g --diag<u>_</u>warning=225 --
diag<u>_</u>wrap=off --display<u>_</u>error<u>_</u>number --preproc<u>_</u>with<u>_</u>compile --preproc<u>_</u>dependency="SysCtrl.d"  "../SysCtrl.c"

&gt;&gt; Compilation failure
subdir<u>_</u>rules.mk:77: recipe for target 'SysCtrl.obj' failed
"../SysCtrl.c", line 10: fatal error #1965: cannot open source file "lab.h"
1 catastrophic error detected in the compilation of "../SysCtrl.c".
Compilation terminated.
gmake: *** [SysCtrl.obj] Error 1
gmake: Target 'all' not remade because of errors.

**** Build Finished ****</div></div>
<div class="sb" style="left:737px;top:46px;width:14px;height:190px"><div class="sbb" style="left:0;top:0;width:12px;height:13px"></div><div class="sbb" style="left:0;bottom:0;width:12px;height:14px"></div><div class="th" style="left:-1px;top:145px;width:14px;height:31px"></div>
<div class="a" style="left:3px;top:157px;width:6px;height:8px;background:repeating-linear-gradient(#aaa 0 1px,transparent 1px 3px)"></div>
<div class="a" style="left:2px;top:4px;border-bottom:4px solid #999;border-left:4px solid transparent;border-right:4px solid transparent"></div>
<div class="a" style="left:2px;bottom:4px;border-top:4px solid #999;border-left:4px solid transparent;border-right:4px solid transparent"></div></div>
</div>

<!-- Status -->
<div class="a" style="left:0;top:736px;width:1366px;height:32px;background:#e8e8e8">
<svg style="left:3px;top:8px" width="17" height="17"><use href="#ccs"/></svg>
<span class="a" style="left:24px;top:8px;line-height:16px;font-size:11px;color:#444">led_4</span>
<div class="a grab" style="left:1066px;top:6px;width:1px;height:22px"></div>
<div class="a grab" style="left:1322px;top:6px;width:1px;height:22px"></div>
<div class="a grab" style="left:1342px;top:6px;width:1px;height:22px"></div>
</div>
</body></html>
